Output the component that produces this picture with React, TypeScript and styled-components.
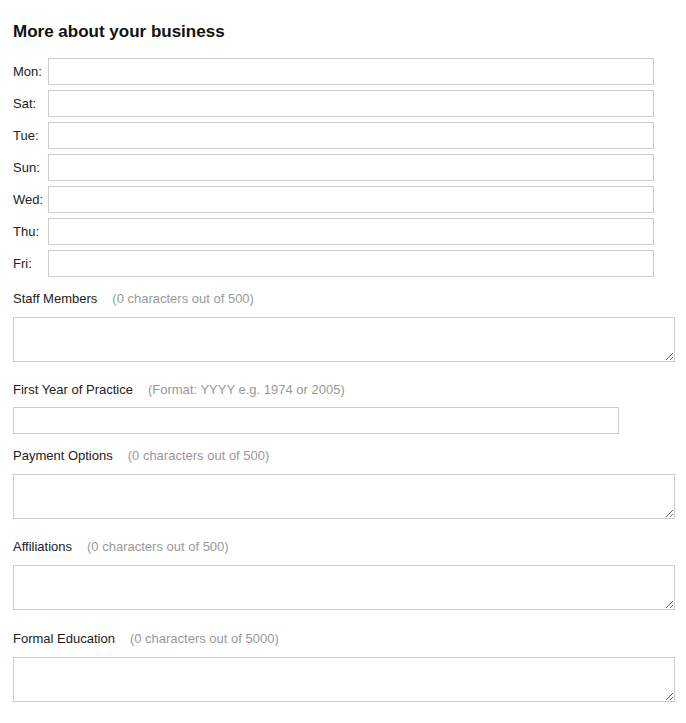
import styled, { createGlobalStyle } from "styled-components";
import { Fragment } from "react";

const GlobalStyle = createGlobalStyle`
  body {
    margin: 8px;
    background: #fff;
    font-family: "Liberation Sans", Arial, sans-serif;
    color: #222;
  }
`;

const Form = styled.form`
  padding: 14px 5px 0;
  display: flex;
  flex-direction: column;
`;

const Heading = styled.h2`
  margin: 0 0 16px;
  font-size: 17px;
  font-weight: bold;
  line-height: 20px;
  color: #111;
`;

const HoursGrid = styled.div`
  display: grid;
  grid-template-columns: 35px 606px;
  row-gap: 5px;
  align-items: center;
  margin-bottom: 14px;
`;

const DayLabel = styled.label`
  font-size: 13px;
  line-height: 16px;
`;

const TextInput = styled.input<{ $width: number }>`
  box-sizing: border-box;
  width: ${(p) => p.$width}px;
  height: 27px;
  margin: 0;
  border: 1px solid #ccc;
  border-radius: 0;
  padding: 2px 4px;
  font: 13px "Liberation Sans", Arial, sans-serif;
  outline: none;
`;

const Section = styled.div<{ $after: number }>`
  display: flex;
  flex-direction: column;
  margin-bottom: ${(p) => p.$after}px;
`;

const FieldLabel = styled.label<{ $gap?: number }>`
  font-size: 13px;
  line-height: 16px;
  margin-bottom: ${(p) => p.$gap ?? 10}px;
`;

const Hint = styled.span`
  color: #999;
  margin-left: 15px;
`;

const TextArea = styled.textarea`
  box-sizing: border-box;
  display: block;
  width: 662px;
  height: 45px;
  margin: 0;
  border: 1px solid #ccc;
  border-radius: 0;
  padding: 4px;
  font: 13px "Liberation Sans", Arial, sans-serif;
  resize: both;
  outline: none;
`;

const days = ["Mon", "Sat", "Tue", "Sun", "Wed", "Thu", "Fri"];

const moreFields = [
  { label: "Payment Options", hint: "(0 characters out of 500)", after: 20 },
  { label: "Affiliations", hint: "(0 characters out of 500)", after: 21 },
  { label: "Formal Education", hint: "(0 characters out of 5000)", after: 20 },
];

export default function App() {
  return (
    <>
      <GlobalStyle />
      <Form onSubmit={(e) => e.preventDefault()}>
        <Heading>More about your business</Heading>
        <HoursGrid>
          {days.map((d) => (
            <Fragment key={d}>
              <DayLabel>{d}:</DayLabel>
              <TextInput $width={606} />
            </Fragment>
          ))}
        </HoursGrid>
        <Section $after={20}>
          <FieldLabel>
            Staff Members
            <Hint>(0 characters out of 500)</Hint>
          </FieldLabel>
          <TextArea />
        </Section>
        <Section $after={14}>
          <FieldLabel $gap={9}>
            First Year of Practice
            <Hint>(Format: YYYY e.g. 1974 or 2005)</Hint>
          </FieldLabel>
          <TextInput $width={606} />
        </Section>
        {moreFields.map((f) => (
          <Section key={f.label} $after={f.after}>
            <FieldLabel>
              {f.label}
              <Hint>{f.hint}</Hint>
            </FieldLabel>
            <TextArea />
          </Section>
        ))}
      </Form>
    </>
  );
}
